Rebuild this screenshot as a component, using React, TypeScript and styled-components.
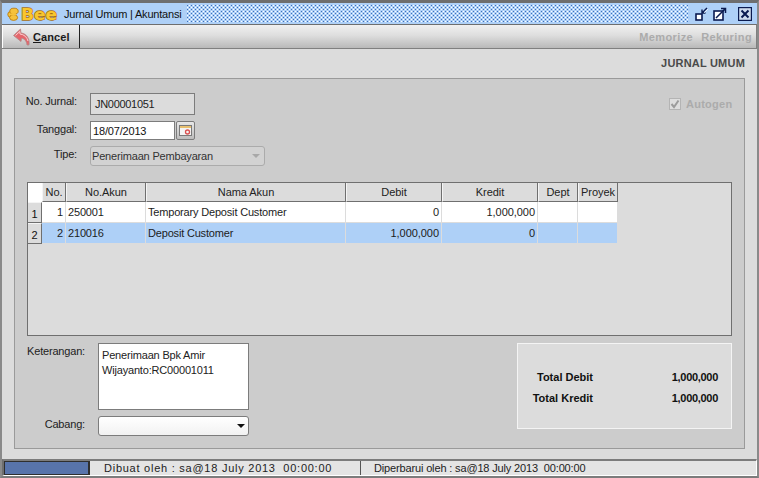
import React from "react";
import styled, { createGlobalStyle } from "styled-components";

const GlobalStyle = createGlobalStyle`
  html, body {
    margin: 0;
    padding: 0;
    background: #dcdcdc;
  }
  body {
    font-family: "Liberation Sans", Arial, sans-serif;
    font-size: 11px;
    letter-spacing: -0.18px;
    color: #111;
  }
`;

const Frame = styled.div`
  width: 759px;
  height: 478px;
  box-sizing: border-box;
  border-top: 3px solid #6e6e6e;
  border-left: 2px solid #8a8a8a;
  border-right: 2px solid #8a8a8a;
  border-bottom: 2px solid #7c7c7c;
  display: flex;
  flex-direction: column;
  overflow: hidden;
  background: #dcdcdc;
`;

const TitleBar = styled.div`
  height: 21px;
  flex: none;
  display: flex;
  align-items: center;
  background: #aed0f7;
  padding: 0 5px 0 5px;
`;

const TitleText = styled.span`
  margin-left: 5px;
  font-size: 11px;
  letter-spacing: -0.2px;
  white-space: nowrap;
`;

const Dots = styled.div`
  flex: 1;
  height: 17px;
  margin: 0 7px 0 6px;
  background:
    radial-gradient(circle at 0.5px 0.5px, #3f70ba 0.7px, transparent 0.8px) 0 0 / 4px 4px,
    radial-gradient(circle at 0.5px 0.5px, #3f70ba 0.7px, transparent 0.8px) 2px 2px / 4px 4px,
    radial-gradient(circle at 0.5px 0.5px, #ffffff 0.7px, transparent 0.8px) 2px 0 / 4px 4px,
    radial-gradient(circle at 0.5px 0.5px, #ffffff 0.7px, transparent 0.8px) 0 2px / 4px 4px;
`;

const WinButtons = styled.div`
  display: flex;
  align-items: center;
  gap: 4px;
`;

const WinIcon = styled.svg<{ $gap?: number }>`
  width: 14px;
  height: 14px;
  display: block;
  margin-left: ${(p) => p.$gap ?? 0}px;
`;

const Toolbar = styled.div`
  height: 25px;
  flex: none;
  box-sizing: border-box;
  display: flex;
  align-items: stretch;
  justify-content: space-between;
  background: linear-gradient(#f0f0f0, #dedede 45%, #b9b9b9);
  border-top: 1px solid #6e6e6e;
  border-bottom: 1px solid #808080;
  border-right: 1px solid #808080;
`;

const CancelButton = styled.div`
  width: 78px;
  display: flex;
  align-items: center;
  gap: 2px;
  padding-left: 10px;
  box-sizing: border-box;
  border-right: 1px solid #222;
  border-left: 1px solid #fff;
  font-weight: bold;
  font-size: 11px;
  letter-spacing: 0.1px;
  color: #1a1a1a;
  u {
    text-underline-offset: 1px;
  }
`;

const ToolLinks = styled.div`
  display: flex;
  align-items: center;
  gap: 8px;
  padding-right: 4px;
`;

const ToolLink = styled.span`
  font-weight: bold;
  font-size: 11px;
  letter-spacing: 0.4px;
  color: #ababab;
`;

const Content = styled.div`
  flex: 1;
  min-height: 0;
  display: flex;
  flex-direction: column;
  padding: 0 12px 10px;
  background: #dcdcdc;
`;

const Heading = styled.div`
  height: 29px;
  flex: none;
  display: flex;
  align-items: center;
  justify-content: flex-end;
  padding-bottom: 1px;
  box-sizing: border-box;
  font-weight: bold;
  font-size: 11px;
  letter-spacing: 0.2px;
  color: #4a4a4a;
`;

const Panel = styled.div`
  flex: 1;
  min-height: 0;
  border: 1px solid #9a9a9a;
  background: #cccccc;
  padding: 14px 12px 11px;
  display: flex;
  flex-direction: column;
`;

const TopArea = styled.div`
  display: flex;
  justify-content: space-between;
  height: 89px;
  flex: none;
`;

const FormGrid = styled.div`
  display: grid;
  grid-template-columns: 50px auto;
  column-gap: 13px;
  grid-auto-rows: min-content;
  justify-items: start;
`;

const Label = styled.label<{ $top?: number }>`
  justify-self: end;
  font-size: 11px;
  color: #222;
  white-space: nowrap;
  padding-top: ${(p) => p.$top ?? 0}px;
`;

const ReadOnlyField = styled.div`
  width: 105px;
  height: 22px;
  box-sizing: border-box;
  border: 1px solid #7c7c7c;
  background: #dcdcdc;
  padding: 4px 0 0 4px;
  letter-spacing: -0.3px;
  color: #222;
  margin-bottom: 6px;
`;

const DateRow = styled.div`
  display: flex;
  gap: 1px;
  margin-bottom: 6px;
`;

const DateField = styled.div`
  width: 85px;
  height: 19px;
  box-sizing: border-box;
  border: 1px solid #7c7c7c;
  background: #fff;
  padding: 3px 0 0 2px;
`;

const CalendarButton = styled.div`
  width: 19px;
  height: 19px;
  box-sizing: border-box;
  border: 1px solid #7c7c7c;
  border-radius: 2px;
  background: linear-gradient(#e8e8e8, #bdbdbd);
  display: flex;
  align-items: center;
  justify-content: center;
`;

const DisabledSelect = styled.div`
  width: 175px;
  height: 20px;
  box-sizing: border-box;
  border: 1px solid #ababab;
  border-radius: 3px;
  background: #d2d2d2;
  padding: 3px 0 0 1px;
  color: #333;
  position: relative;
`;

const SelectCaret = styled.span<{ $color: string; $right: number }>`
  position: absolute;
  right: ${(p) => p.$right}px;
  top: 50%;
  margin-top: -2px;
  border-left: 4px solid transparent;
  border-right: 4px solid transparent;
  border-top: 4px solid ${(p) => p.$color};
`;

const Autogen = styled.div`
  display: flex;
  align-items: flex-start;
  gap: 5px;
  margin: 5px -2px 0 0;
  width: 65px;
  font-weight: bold;
  letter-spacing: 0.25px;
  color: #ababab;
`;

const CheckBox = styled.span`
  width: 12px;
  height: 12px;
  flex: none;
  box-sizing: border-box;
  border: 1px solid #b4b4b4;
  background: #dedede;
  display: flex;
  align-items: center;
  justify-content: center;
`;

const TableWrap = styled.div`
  height: 154px;
  flex: none;
  box-sizing: border-box;
  border: 1px solid #6f6f6f;
  background: #dcdcdc;
  overflow: hidden;
`;

const Columns = "14px 24px 80px 200px 96px 96px 40px 40px";

const HeaderRow = styled.div`
  display: grid;
  grid-template-columns: ${Columns};
  width: 590px;
  height: 19px;
`;

const Corner = styled.div`
  background: #fff;
`;

const HeaderCell = styled.div`
  box-sizing: border-box;
  background: #dcdcdc;
  border-left: 1px solid #f4f4f4;
  border-right: 1px solid #6f6f6f;
  border-bottom: 1px solid #6f6f6f;
  display: flex;
  align-items: center;
  justify-content: center;
  letter-spacing: -0.05px;
  color: #222;
  white-space: nowrap;
  overflow: hidden;
`;

const DataRow = styled.div<{ $selected?: boolean }>`
  display: grid;
  grid-template-columns: ${Columns};
  width: 590px;
  height: 20px;
  background: ${(p) => (p.$selected ? "#aed0f7" : "#fff")};
  margin-bottom: 1px;
`;

const RowHead = styled.div`
  box-sizing: border-box;
  background: #dcdcdc;
  border-right: 1px solid #6f6f6f;
  border-bottom: 1px solid #6f6f6f;
  border-top: 1px solid #f4f4f4;
  display: flex;
  align-items: center;
  justify-content: center;
  padding-top: 3px;
  margin-bottom: -1px;
`;

const Cell = styled.div<{ $right?: boolean }>`
  box-sizing: border-box;
  border-right: 1px solid #dcdcdc;
  display: flex;
  align-items: center;
  justify-content: ${(p) => (p.$right ? "flex-end" : "flex-start")};
  padding: 0 2px;
  letter-spacing: ${(p) => (p.$right ? "-0.05px" : "-0.18px")};
  color: #1c1c1c;
  white-space: nowrap;
`;

const BottomArea = styled.div`
  display: flex;
  justify-content: space-between;
  margin-top: 7px;
`;

const NotesGrid = styled.div`
  display: grid;
  grid-template-columns: 58px 151px;
  column-gap: 13px;
  row-gap: 6px;
`;

const Notes = styled.div`
  height: 67px;
  box-sizing: border-box;
  border: 1px solid #7c7c7c;
  background: #fff;
  padding: 4px 4px 0 3px;
  line-height: 15px;
  color: #222;
`;

const BranchSelect = styled.div`
  height: 20px;
  box-sizing: border-box;
  border: 1px solid #7c7c7c;
  border-radius: 3px;
  background: linear-gradient(#fff, #f2f2f2);
  position: relative;
`;

const TotalsBox = styled.div`
  width: 215px;
  height: 86px;
  box-sizing: border-box;
  border: 1px solid #f4f4f4;
  background: #dcdcdc;
  display: grid;
  grid-template-columns: 75px 1fr;
  grid-auto-rows: 21px;
  align-content: center;
  padding: 2px 13px 0 0;
  font-weight: bold;
  letter-spacing: 0;
  color: #111;
`;

const TotalLabel = styled.div`
  text-align: right;
  align-self: center;
`;

const TotalValue = styled.div`
  text-align: right;
  align-self: center;
  letter-spacing: -0.3px;
`;

const StatusBar = styled.div`
  height: 17px;
  flex: none;
  box-sizing: border-box;
  border-top: 2px solid #7c7c7c;
  border-bottom: 1px solid #fff;
  border-left: 2px solid #6e6e6e;
  border-right: 1px solid #fff;
  display: flex;
  background: #e4e4e4;
`;

const Progress = styled.div`
  width: 86px;
  flex: none;
  background: #5874ab;
  border: 1px solid #2f2f2f;
  border-width: 1px 2px 1px 1px;
  box-sizing: border-box;
`;

const StatusCell = styled.div<{ $width?: number; $spacing: number; $pad: number }>`
  width: ${(p) => (p.$width ? `${p.$width}px` : "auto")};
  flex: ${(p) => (p.$width ? "none" : "1")};
  box-sizing: border-box;
  padding-left: ${(p) => p.$pad}px;
  display: flex;
  align-items: center;
  letter-spacing: ${(p) => p.$spacing}px;
  color: #222;
  white-space: pre;
  border-right: ${(p) => (p.$width ? "1px solid #555" : "none")};
`;

const BeeLogo = () => (
  <svg width="52" height="18" viewBox="0 0 52 18">
    <g fill="#f5c23c" stroke="#b97a10" strokeWidth="0.9">
      <ellipse cx="3.4" cy="9.4" rx="2.6" ry="2.8" />
      <ellipse cx="7" cy="6.2" rx="4.2" ry="3" />
      <ellipse cx="6.6" cy="12.6" rx="4" ry="2.8" />
    </g>
    <ellipse cx="6.5" cy="9.4" rx="3" ry="1.4" fill="#f5c23c" />
    <text
      x="14"
      y="15"
      fontFamily="'DejaVu Sans', sans-serif"
      fontWeight="bold"
      fontSize="16"
      letterSpacing="0"
      textLength="36"
      lengthAdjust="spacingAndGlyphs"
      fill="#f8c62e"
      stroke="#a86f10"
      strokeWidth="1.3"
      paintOrder="stroke"
    >
      Bee
    </text>
  </svg>
);

const CancelIcon = () => (
  <svg width="18" height="18" viewBox="0 0 18 18">
    <path
      d="M0.5 7.5 L7.5 1 L8 5 C13 5.5 17 10 16 17 L14 17 C13.5 13 11.5 10.5 8.5 10.5 L8 13.5 Z"
      fill="#e4666c"
      stroke="#b08a8a"
      strokeWidth="0.8"
    />
    <path d="M2.5 7.5 L6.8 3.5 L7 6 C11 6.5 14 9 15 13" fill="none" stroke="#f9d0d0" strokeWidth="1" />
  </svg>
);

const MinimizeIcon = () => (
  <WinIcon viewBox="0 0 14 14">
    <rect x="1" y="7" width="6" height="6" fill="#fff" stroke="#0a1a50" strokeWidth="1.6" />
    <path d="M12 1 L7 6 M7 2.5 L7 6 L10.5 6" fill="none" stroke="#0a1a50" strokeWidth="1.4" />
    <path d="M13 2 L9 6" stroke="#fff" strokeWidth="0.7" />
  </WinIcon>
);

const MaximizeIcon = () => (
  <WinIcon viewBox="0 0 14 14">
    <rect x="1" y="4" width="9" height="9" fill="#fff" stroke="#0a1a50" strokeWidth="1.6" />
    <path d="M3 11 L12 2 M8 1.5 L12.5 1.5 L12.5 6" fill="none" stroke="#0a1a50" strokeWidth="1.5" />
  </WinIcon>
);

const CloseIcon = () => (
  <WinIcon viewBox="0 0 14 14" $gap={7}>
    <rect x="0.5" y="0.5" width="13" height="13" fill="#cfdcee" stroke="#0a1a50" strokeWidth="1.4" />
    <path d="M3.5 3.5 L10.5 10.5 M10.5 3.5 L3.5 10.5" stroke="#0a1a50" strokeWidth="2" />
  </WinIcon>
);

const CalendarIcon = () => (
  <svg width="13" height="11" viewBox="0 0 13 11">
    <rect x="0.5" y="0.5" width="12" height="10" fill="#f4f4f4" stroke="#7a7a7a" />
    <rect x="1" y="1" width="11" height="2" fill="#e8c070" />
    <circle cx="8.5" cy="7" r="2" fill="none" stroke="#d9504f" strokeWidth="1.3" />
  </svg>
);

const rows = [
  { no: 1, akun: "250001", nama: "Temporary Deposit Customer", debit: "0", kredit: "1,000,000" },
  { no: 2, akun: "210016", nama: "Deposit Customer", debit: "1,000,000", kredit: "0" },
];

export default function App() {
  return (
    <Frame>
      <GlobalStyle />
      <TitleBar>
        <BeeLogo />
        <TitleText>Jurnal Umum | Akuntansi</TitleText>
        <Dots />
        <WinButtons>
          <MinimizeIcon />
          <MaximizeIcon />
          <CloseIcon />
        </WinButtons>
      </TitleBar>
      <Toolbar>
        <CancelButton>
          <CancelIcon />
          <span>
            <u>C</u>ancel
          </span>
        </CancelButton>
        <ToolLinks>
          <ToolLink>Memorize</ToolLink>
          <ToolLink>Rekuring</ToolLink>
        </ToolLinks>
      </Toolbar>
      <Content>
        <Heading>JURNAL UMUM</Heading>
        <Panel>
          <TopArea>
            <FormGrid>
              <Label $top={2}>No. Jurnal:</Label>
              <ReadOnlyField>JN00001051</ReadOnlyField>
              <Label $top={2}>Tanggal:</Label>
              <DateRow>
                <DateField>18/07/2013</DateField>
                <CalendarButton>
                  <CalendarIcon />
                </CalendarButton>
              </DateRow>
              <Label $top={2}>Tipe:</Label>
              <DisabledSelect>
                Penerimaan Pembayaran
                <SelectCaret $color="#a8a8a8" $right={4} />
              </DisabledSelect>
            </FormGrid>
            <Autogen>
              <CheckBox>
                <svg width="10" height="10" viewBox="0 0 10 10">
                  <path d="M1.5 5 L4 8 L8.5 1.5" fill="none" stroke="#9c9c9c" strokeWidth="2" />
                </svg>
              </CheckBox>
              Autogen
            </Autogen>
          </TopArea>
          <TableWrap>
            <HeaderRow>
              <Corner />
              <HeaderCell>No.</HeaderCell>
              <HeaderCell>No.Akun</HeaderCell>
              <HeaderCell>Nama Akun</HeaderCell>
              <HeaderCell>Debit</HeaderCell>
              <HeaderCell>Kredit</HeaderCell>
              <HeaderCell>Dept</HeaderCell>
              <HeaderCell>Proyek</HeaderCell>
            </HeaderRow>
            {rows.map((r) => (
              <DataRow key={r.no} $selected={r.no === 2}>
                <RowHead>{r.no}</RowHead>
                <Cell $right>{r.no}</Cell>
                <Cell>{r.akun}</Cell>
                <Cell>{r.nama}</Cell>
                <Cell $right>{r.debit}</Cell>
                <Cell $right>{r.kredit}</Cell>
                <Cell />
                <Cell />
              </DataRow>
            ))}
          </TableWrap>
          <BottomArea>
            <NotesGrid>
              <Label $top={2}>Keterangan:</Label>
              <Notes>
                Penerimaan Bpk Amir
                <br />
                Wijayanto:RC00001011
              </Notes>
              <Label $top={2}>Cabang:</Label>
              <BranchSelect>
                <SelectCaret $color="#111" $right={3} />
              </BranchSelect>
            </NotesGrid>
            <TotalsBox>
              <TotalLabel>Total Debit</TotalLabel>
              <TotalValue>1,000,000</TotalValue>
              <TotalLabel>Total Kredit</TotalLabel>
              <TotalValue>1,000,000</TotalValue>
            </TotalsBox>
          </BottomArea>
        </Panel>
      </Content>
      <StatusBar>
        <Progress />
        <StatusCell $width={271} $spacing={0.75} $pad={14}>
          Dibuat oleh : sa@18 July 2013  00:00:00
        </StatusCell>
        <StatusCell $spacing={-0.15} $pad={13}>
          Diperbarui oleh : sa@18 July 2013  00:00:00
        </StatusCell>
      </StatusBar>
    </Frame>
  );
}
